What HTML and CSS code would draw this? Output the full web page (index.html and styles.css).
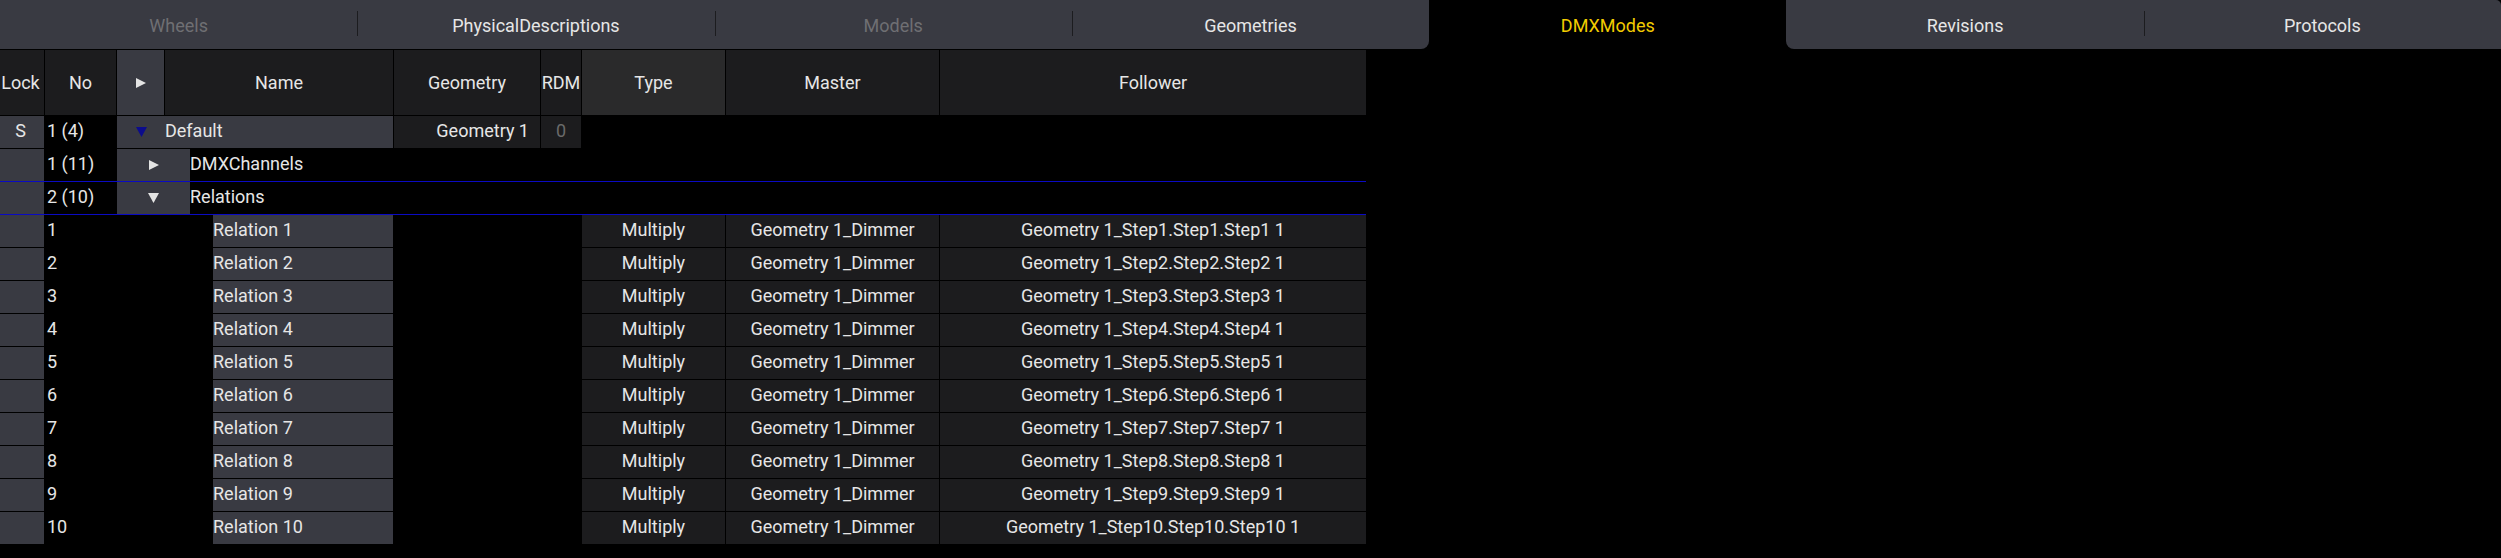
FILE: index.html
```html
<!DOCTYPE html>
<html>
<head>
<meta charset="utf-8">
<link rel="stylesheet" href="styles.css">
</head>
<body>
<div class="app">
  <nav class="tabs">
    <div class="tab dim">Wheels</div>
    <div class="tab sep">PhysicalDescriptions</div>
    <div class="tab dim sep">Models</div>
    <div class="tab sep before-active">Geometries</div>
    <div class="tab active">DMXModes</div>
    <div class="tab after-active">Revisions</div>
    <div class="tab sep last">Protocols</div>
  </nav>

  <div class="sheet">
    <div class="row head">
      <div class="c dark center lock">Lock</div>
      <div class="c dark center">No</div>
      <div class="c grey center"><svg class="tri" width="10" height="10" viewBox="0 0 10 10"><path d="M0 0 L10 5 L0 10 Z" fill="#e4e4e4"/></svg></div>
      <div class="c dark center">Name</div>
      <div class="c dark center">Geometry</div>
      <div class="c dark center">RDM</div>
      <div class="c mid center">Type</div>
      <div class="c dark center">Master</div>
      <div class="c dark center">Follower</div>
    </div>

    <div class="row">
      <div class="c grey center lock">S</div>
      <div class="c num">1 (4)</div>
      <div class="tree grey">
        <span class="twisty w48"><svg width="11" height="10" viewBox="0 0 11 10"><path d="M0 0 L11 0 L5.5 10 Z" fill="#0c0c8c"/></svg></span>
        <span class="label">Default</span>
      </div>
      <div class="c dark right">Geometry 1</div>
      <div class="c dark center faint">0</div>
      <div class="c"></div>
      <div class="c"></div>
      <div class="c"></div>
    </div>

    <div class="row blue">
      <div class="c grey"></div>
      <div class="c num">1 (11)</div>
      <div class="tree">
        <span class="twisty w72 grey"><svg width="10" height="10" viewBox="0 0 10 10"><path d="M0 0 L10 5 L0 10 Z" fill="#e4e4e4"/></svg></span>
        <span class="label">DMXChannels</span>
      </div>
      <div class="c"></div>
      <div class="c"></div>
      <div class="c"></div>
      <div class="c"></div>
      <div class="c"></div>
    </div>

    <div class="row blue">
      <div class="c grey"></div>
      <div class="c num">2 (10)</div>
      <div class="tree">
        <span class="twisty w72 grey"><svg width="11" height="10" viewBox="0 0 11 10"><path d="M0 0 L11 0 L5.5 10 Z" fill="#e4e4e4"/></svg></span>
        <span class="label">Relations</span>
      </div>
      <div class="c"></div>
      <div class="c"></div>
      <div class="c"></div>
      <div class="c"></div>
      <div class="c"></div>
    </div>

    <div class="row"><div class="c grey"></div><div class="c num">1</div><div class="tree"><span class="indent"></span><span class="label grey">Relation 1</span></div><div class="c"></div><div class="c"></div><div class="c dark center">Multiply</div><div class="c dark center">Geometry 1_Dimmer</div><div class="c dark center">Geometry 1_Step1.Step1.Step1 1</div></div>
    <div class="row"><div class="c grey"></div><div class="c num">2</div><div class="tree"><span class="indent"></span><span class="label grey">Relation 2</span></div><div class="c"></div><div class="c"></div><div class="c dark center">Multiply</div><div class="c dark center">Geometry 1_Dimmer</div><div class="c dark center">Geometry 1_Step2.Step2.Step2 1</div></div>
    <div class="row"><div class="c grey"></div><div class="c num">3</div><div class="tree"><span class="indent"></span><span class="label grey">Relation 3</span></div><div class="c"></div><div class="c"></div><div class="c dark center">Multiply</div><div class="c dark center">Geometry 1_Dimmer</div><div class="c dark center">Geometry 1_Step3.Step3.Step3 1</div></div>
    <div class="row"><div class="c grey"></div><div class="c num">4</div><div class="tree"><span class="indent"></span><span class="label grey">Relation 4</span></div><div class="c"></div><div class="c"></div><div class="c dark center">Multiply</div><div class="c dark center">Geometry 1_Dimmer</div><div class="c dark center">Geometry 1_Step4.Step4.Step4 1</div></div>
    <div class="row"><div class="c grey"></div><div class="c num">5</div><div class="tree"><span class="indent"></span><span class="label grey">Relation 5</span></div><div class="c"></div><div class="c"></div><div class="c dark center">Multiply</div><div class="c dark center">Geometry 1_Dimmer</div><div class="c dark center">Geometry 1_Step5.Step5.Step5 1</div></div>
    <div class="row"><div class="c grey"></div><div class="c num">6</div><div class="tree"><span class="indent"></span><span class="label grey">Relation 6</span></div><div class="c"></div><div class="c"></div><div class="c dark center">Multiply</div><div class="c dark center">Geometry 1_Dimmer</div><div class="c dark center">Geometry 1_Step6.Step6.Step6 1</div></div>
    <div class="row"><div class="c grey"></div><div class="c num">7</div><div class="tree"><span class="indent"></span><span class="label grey">Relation 7</span></div><div class="c"></div><div class="c"></div><div class="c dark center">Multiply</div><div class="c dark center">Geometry 1_Dimmer</div><div class="c dark center">Geometry 1_Step7.Step7.Step7 1</div></div>
    <div class="row"><div class="c grey"></div><div class="c num">8</div><div class="tree"><span class="indent"></span><span class="label grey">Relation 8</span></div><div class="c"></div><div class="c"></div><div class="c dark center">Multiply</div><div class="c dark center">Geometry 1_Dimmer</div><div class="c dark center">Geometry 1_Step8.Step8.Step8 1</div></div>
    <div class="row"><div class="c grey"></div><div class="c num">9</div><div class="tree"><span class="indent"></span><span class="label grey">Relation 9</span></div><div class="c"></div><div class="c"></div><div class="c dark center">Multiply</div><div class="c dark center">Geometry 1_Dimmer</div><div class="c dark center">Geometry 1_Step9.Step9.Step9 1</div></div>
    <div class="row"><div class="c grey"></div><div class="c num">10</div><div class="tree"><span class="indent"></span><span class="label grey">Relation 10</span></div><div class="c"></div><div class="c"></div><div class="c dark center">Multiply</div><div class="c dark center">Geometry 1_Dimmer</div><div class="c dark center">Geometry 1_Step10.Step10.Step10 1</div></div>
  </div>
</div>
</body>
</html>
```

FILE: styles.css
```css
* { box-sizing: border-box; }

html, body {
  margin: 0;
  padding: 0;
  background: #000;
}

body {
  width: 2501px;
  height: 558px;
  overflow: hidden;
  font-family: Roboto, "Liberation Sans", sans-serif;
  font-size: 18px;
  color: #e6e6e6;
}

.tabs {
  display: grid;
  grid-template-columns: repeat(7, 1fr);
  height: 49px;
  margin-bottom: 1px;
}

.tab {
  position: relative;
  background: #393a42;
  display: flex;
  align-items: center;
  justify-content: center;
  white-space: nowrap;
  padding-top: 2px;
}

.tab.dim { color: #6f6f73; }

.tab.sep::before {
  content: "";
  position: absolute;
  left: 0;
  top: 11px;
  height: 25px;
  width: 1px;
  background: #1c1c1f;
}

.tab.last { border-top-right-radius: 5px; }

.tab.before-active { border-bottom-right-radius: 8px; }
.tab.after-active { border-bottom-left-radius: 8px; }

.tab.active {
  background: #000;
  color: #f2cc00;
}

.sheet {
  width: 1366px;
}

.row {
  display: grid;
  grid-template-columns: 44px 71px 47px 228px 146px 40px 143px 213px 426px;
  column-gap: 1px;
  height: 33px;
  border-bottom: 1px solid #000;
}

.row.head {
  height: 66px;
}

.row.blue {
  border-bottom-color: #0a0ac4;
}

.c {
  display: flex;
  align-items: center;
  white-space: nowrap;
  overflow: hidden;
}

.row:not(.head) .c,
.row:not(.head) .label {
  padding-bottom: 3px;
}

.center { justify-content: center; }
.right { justify-content: flex-end; padding-right: 11px; }

.lock { padding-right: 3px; }

.num { padding-left: 2px; }

.grey { background: #393a42; }
.dark { background: #1c1c1e; }
.mid { background: #2a2a2b; }
.faint { color: #6a6a6a; }

.tree {
  grid-column: 3 / 5;
  display: flex;
  align-items: stretch;
  white-space: nowrap;
}

.twisty {
  display: flex;
  align-items: center;
  justify-content: center;
  flex: none;
}

.w48 { width: 48px; }
.w72 { width: 73px; }

.indent {
  width: 96px;
  flex: none;
}

.label {
  display: flex;
  align-items: center;
  flex: 1;
}
```
